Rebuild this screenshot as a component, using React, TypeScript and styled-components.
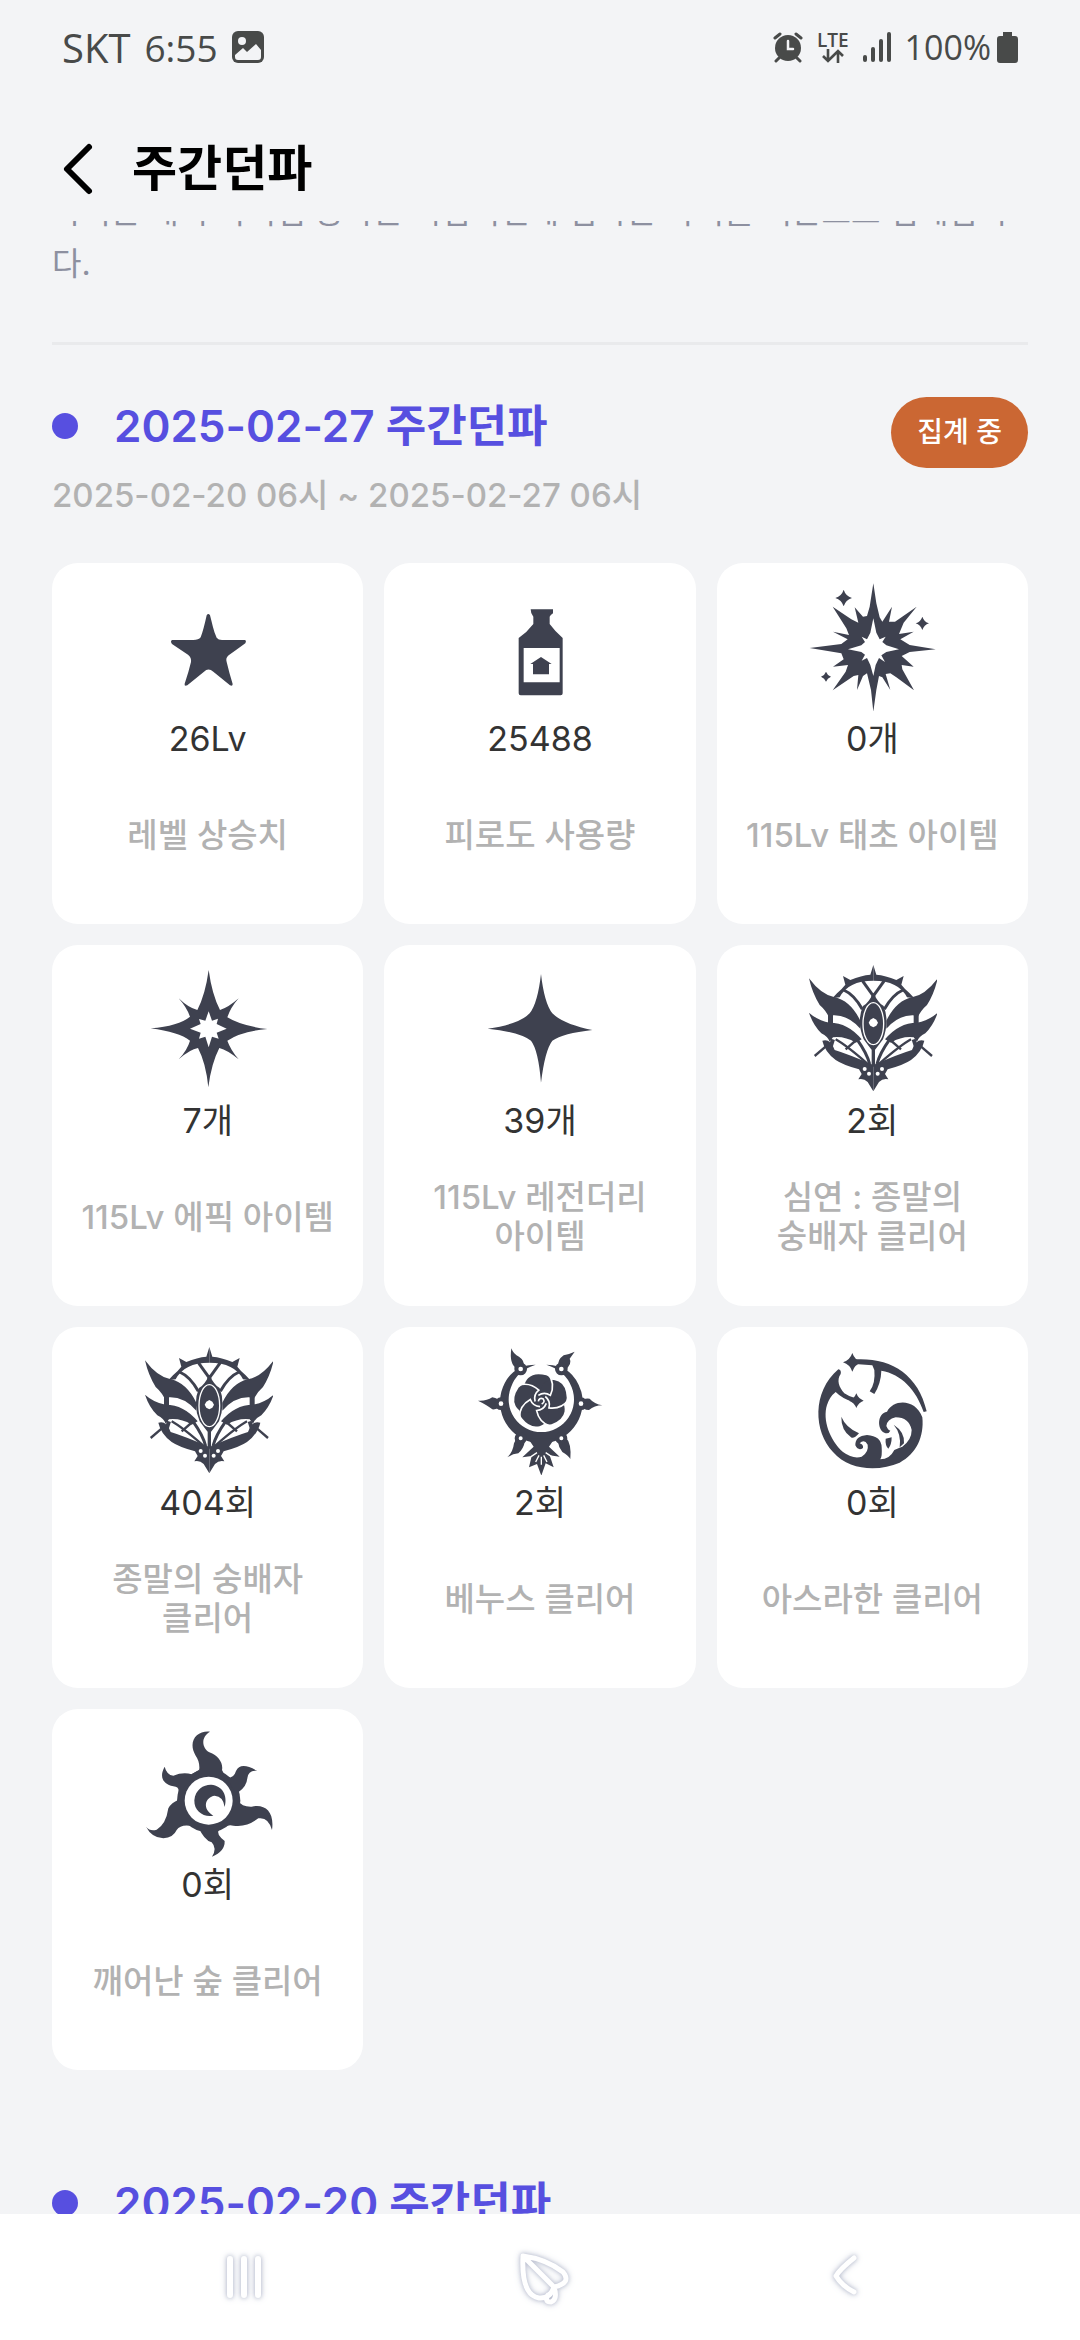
import React from "react";
import styled, { createGlobalStyle } from "styled-components";

const INK = "#3e414f";

const GlobalStyle = createGlobalStyle`
  * { box-sizing: border-box; }
  body {
    margin: 0;
    background: #f3f4f6;
    font-family: Inter, "Noto Sans CJK KR", sans-serif;
    color: #333;
  }
  h1, h2, p, dl, dd, dt { margin: 0; }
  svg { display: block; flex: none; }
`;

const Screen = styled.div`
  height: 100vh;
  display: flex;
  flex-direction: column;
  background: #f3f4f6;
`;

const StatusBar = styled.div`
  height: 94px;
  padding: 0 62px;
  display: flex;
  align-items: center;
  justify-content: space-between;
  color: #484a49;
  font-family: "Open Sans", sans-serif;
  font-size: 34px;
`;

const StatusGroup = styled.div<{ $gap: number }>`
  display: flex;
  align-items: center;
  gap: ${(p) => p.$gap}px;
`;

const Carrier = styled.span`
  font-size: 40px;
`;

const Clock = styled.span`
  font-size: 37px;
`;

const Network = styled.span`
  display: flex;
  flex-direction: column;
  align-items: center;
  font-size: 19px;
  line-height: 18px;
  font-weight: 600;
`;

const AppBar = styled.header`
  flex: none;
  height: 127px;
  padding: 22px 52px 0;
  display: flex;
  align-items: center;
  gap: 28px;
`;

const IconButton = styled.button`
  border: 0;
  padding: 0;
  background: none;
  color: #000;
`;

const PageTitle = styled.h1`
  font-size: 49px;
  line-height: 52px;
  font-weight: 700;
  color: #000;
`;

const Content = styled.main`
  flex: 1;
  min-height: 0;
  overflow: hidden;
  padding: 0 52px;
`;

const Notice = styled.p`
  margin-top: -35px;
  padding-bottom: 52px;
  border-bottom: 3px solid #e9eaec;
  color: #8d90a0;
  font-size: 32px;
  line-height: 52px;
`;

const Week = styled.section`
  padding: 52px 0;
`;

const WeekHead = styled.div`
  display: flex;
  justify-content: space-between;
  align-items: flex-start;
`;

const WeekTitle = styled.h2`
  display: flex;
  align-items: center;
  gap: 36px;
  font-size: 44px;
  line-height: 58px;
  font-weight: 600;
  color: #574fe0;

  &::before {
    content: "";
    width: 26px;
    height: 26px;
    border-radius: 50%;
    background: currentColor;
  }
`;

const Period = styled.p`
  margin-top: 15px;
  font-size: 33px;
  line-height: 50px;
  font-weight: 500;
  color: #b2b2b2;
`;

const Badge = styled.span`
  padding: 0 26px;
  border-radius: 36px;
  background: #cb6733;
  color: #fff;
  font-size: 28px;
  line-height: 71px;
  font-weight: 500;
`;

const Grid = styled.dl`
  margin-top: 43px;
  display: grid;
  grid-template-columns: repeat(3, 1fr);
  gap: 21px;
`;

const Tile = styled.div`
  padding: 18px 24px 33px;
  border-radius: 26px;
  background: #fff;
  display: flex;
  flex-direction: column;
  align-items: center;
  text-align: center;
`;

const Value = styled.dd`
  order: 1;
  font-size: 34px;
  line-height: 56px;
`;

const Label = styled.dt`
  order: 2;
  margin-top: 12px;
  min-height: 112px;
  display: flex;
  align-items: center;
  word-break: keep-all;
  color: #b2b2b2;
  font-size: 33px;
  line-height: 39px;
  font-weight: 500;
`;

const NavBar = styled.nav`
  flex: none;
  height: 126px;
  padding-left: 8px;
  background: #fff;
  display: flex;
  justify-content: center;
`;

const NavButton = styled.button`
  flex: 0 0 28%;
  border: 0;
  padding: 0;
  background: none;
  display: flex;
  align-items: center;
  justify-content: center;

  svg {
    filter: drop-shadow(0 0 2px #b4b9cb) drop-shadow(0 0 3px #dfe2ea);
  }
`;

function Glyph({ box, children }: { box: string; children: React.ReactNode }) {
  return (
    <svg width="130" height="130" viewBox={box} fill={INK} aria-hidden="true">
      {children}
    </svg>
  );
}

const sparkle = (x: number, y: number, r: number) => {
  const k = Math.round(r / 4);
  return `M${x} ${y - r}Q${x + k} ${y - k} ${x + r} ${y}Q${x + k} ${y + k} ${x} ${y + r}Q${x - k} ${y + k} ${x - r} ${y}Q${x - k} ${y - k} ${x} ${y - r}Z`;
};

const StarGlyph = () => (
  <Glyph box="39 33 390 390">
    <path d="M230 136Q235 128 240 136C246 158 250 182 260 203Q265 210 276 210H345Q350 212 346 220Q316 242 296 256Q286 264 290 276Q298 310 308 342Q308 350 300 346L250 305Q235 292 222 305L172 346Q162 350 164 341Q176 306 183 276Q185 262 174 254L126 222Q120 213 126 210H190Q206 210 212 202Q220 182 230 136Z" />
  </Glyph>
);

const PotionGlyph = () => (
  <Glyph box="1036 33 390 390">
    <path d="M1203 118h67v12q-8 5-10 10v22q16 22 39 42v166q0 6-6 6h-120q-6 0-6-6v-166q26-18 44-42v-22q-8-8-8-22z" />
    <path fill="#fff" d="M1182 234h108v103h-108z" />
    <path d="M1234 261l32 21h-8v31h-48v-31h-8z" />
  </Glyph>
);

const PrimevalGlyph = () => (
  <Glyph box="82 33 390 390">
    <path d="M281 40L290 100 300 142 308 155 337 110 328 155 346 155 411 110 372 158 358 192 402 185 362 208 390 225 468 238 390 246 366 258 402 290 366 285 368 298 403 361 350 322 332 310 318 312 332 360 308 322 298 318 290 360 281 425 274 360 262 310 250 318 232 360 236 315 222 318 159 361 198 305 205 285 160 290 192 268 185 250 90 234 185 222 204 208 160 185 208 195 200 175 159 110 215 148 236 158 225 112 250 140 262 138 270 110Z" />
    <path fill="#fff" d="M281 145L290 188 300 208 318 200 308 216 320 226 358 238 320 246 305 256 316 276 298 264 288 285 281 318 272 285 262 264 246 272 256 254 245 246 205 238 245 226 256 216 246 200 262 208 272 188Z" />
    <path d={sparkle(192, 84, 25) + sparkle(428, 160, 20) + sparkle(139, 320, 15)} />
  </Glyph>
);

const EpicGlyph = () => (
  <Glyph box="39 39 390 390">
    <path d="M236 60Q246 134 270 180Q296 172 326 145Q302 172 292 202Q334 228 412 237Q334 244 292 272Q302 300 326 328Q292 300 268 294Q244 340 235 412Q228 340 204 294Q180 298 146 328Q172 300 180 272Q146 246 62 235Q146 228 180 200Q170 172 146 145Q176 174 202 180Q226 134 236 60Z" />
    <path fill="#fff" d="M236 184L246 212 264 206 260 222 290 236 260 248 266 266 246 260 236 292 226 260 207 266 212 248 180 236 212 222 207 207 226 212Z" />
  </Glyph>
);

const LegendaryGlyph = () => (
  <Glyph box="1036 39 390 390">
    <path d="M1234 72Q1244 160 1268 190Q1300 222 1388 240Q1300 250 1268 272Q1246 300 1234 398Q1226 300 1204 272Q1170 246 1074 236Q1170 222 1200 190Q1224 160 1234 72Z" />
  </Glyph>
);

const AbyssHalf = () => (
  <>
    <path d="M88 85Q125 135 165 142Q212 152 242 212V236Q205 194 160 196L152 210Q140 182 120 165Q98 130 88 85Z" />
    <path d="M88 188Q115 212 150 218Q205 218 246 268L228 278Q195 258 160 262L150 275Q145 260 125 250Q100 225 88 188Z" />
    <path d="M145 185h15v38h-15z" />
    <path d="M128 272Q152 264 165 300Q205 312 281 345V424L264 396Q252 384 236 388L246 372L238 358Q190 345 168 330Q135 305 128 272Z" />
    <path d="M158 145L172 130Q186 118 197 104L190 78L212 90Q245 76 272 74L281 45V92Q205 92 180 142Z" />
    <g fill="none" stroke={INK} strokeWidth="7">
      <path d="M105 318L142 286" />
      <path d="M192 120Q224 134 248 178" strokeWidth="9" />
      <path d="M248 92L284 142" strokeWidth="9" />
      <path d="M168 268Q200 286 262 340" />
      <path d="M198 298L230 270" />
      <path d="M232 268Q262 310 270 342" strokeWidth="9" />
      <path d="M160 268L150 300" strokeWidth="12" />
    </g>
  </>
);

const AbyssGlyph = () => (
  <Glyph box="82 39 390 390">
    <AbyssHalf />
    <g transform="translate(562 0) scale(-1 1)">
      <AbyssHalf />
    </g>
    <path d="M281 128Q296 160 312 168Q330 215 310 268Q294 290 281 306Q268 290 252 268Q230 215 250 168Q266 160 281 128ZM276 290h10v60h-10z" />
    <ellipse cx="281" cy="221" rx="31" ry="63" fill="none" stroke="#fff" strokeWidth="4" />
    <path fill="#fff" d="M281 204l9 5 5 9-5 9-9 5-9-5-5-9 5-9z" />
    <g fill="#fff">
      <circle cx="255" cy="357" r="6" />
      <circle cx="307" cy="357" r="6" />
      <circle cx="268" cy="371" r="6" />
      <circle cx="294" cy="371" r="6" />
    </g>
  </Glyph>
);

const petals = [0, 72, 144, 216, 288];

const VenusGlyph = () => (
  <Glyph box="46 45 390 390">
    <path d="M228 104Q170 122 154 172A98 98 0 1 0 336 172Q318 122 260 104Q340 104 365 185A124 124 0 1 1 125 185Q150 104 228 104Z" />
    <path d="M155 55Q162 74 178 80Q196 92 192 110L172 116Q148 104 155 55Z" />
    <path d="M345 65Q330 72 312 76Q292 90 296 110L318 118Q338 100 330 86Z" />
    <path d="M55 212Q80 214 98 202Q116 204 130 222Q114 240 98 238Q84 226 55 212Z" />
    <path d="M428 226Q404 222 390 206Q372 202 358 222Q370 240 388 240Q404 226 428 226Z" />
    <path d="M143 382Q160 366 163 340L172 322L196 332Q192 356 176 370Q160 370 143 382Z" />
    <path d="M332 387Q326 376 308 366Q296 350 294 332L318 322Q336 340 332 387Z" />
    <path d="M205 325H285L268 350L300 380L270 376L282 412L258 400L245 437L232 402L208 412L216 378L188 382L222 350Z" />
    <g stroke="#fff" strokeWidth="4" fill="none">
      <path d="M238 376L228 396M252 376L262 396M232 368L214 380M258 368L276 380M245 380V404" />
    </g>
    <g stroke={INK} strokeWidth="12" fill="#fff">
      <circle cx="183" cy="117" r="13" />
      <circle cx="305" cy="117" r="13" />
      <circle cx="124" cy="221" r="13" />
      <circle cx="364" cy="221" r="13" />
      <circle cx="183" cy="325" r="12" />
      <circle cx="305" cy="325" r="12" />
    </g>
    {petals.map((a) => (
      <path key={a} transform={`rotate(${a} 244 212)`} d="M244 212C186 204 186 164 206 144Q224 126 260 136C290 150 294 184 268 212Z" />
    ))}
    <g fill="none" stroke="#fff" strokeWidth="5">
      {petals.map((a) => (
        <path key={a} transform={`rotate(${a} 244 212)`} d="M236 196Q254 184 272 196Q288 162 266 132" />
      ))}
      <path d="M236 214Q238 202 250 206Q258 216 246 222" />
    </g>
  </Glyph>
);

const AsrahanGlyph = () => (
  <Glyph box="52 45 390 390">
    <path d="M146 118Q156 120 153 132C140 150 148 172 164 190Q178 200 196 204L192 216Q160 208 138 186Q120 200 112 225C98 270 120 330 160 366Q190 388 216 380Q238 366 234 344Q224 326 210 340Q222 344 220 354Q206 364 197 346Q196 318 232 315Q275 318 276 352Q278 380 272 388Q300 388 314 360Q330 352 338 350Q366 330 366 300Q358 262 318 262Q292 268 290 288Q296 302 302 302Q296 314 284 308C262 298 262 250 292 245C312 206 378 206 398 262C404 320 380 372 330 398C270 424 180 424 130 366C72 306 66 186 146 118Z" />
    <path d="M196 88C300 82 385 130 411 244L402 246C380 180 335 132 275 122Q274 160 254 192L240 184Q258 160 254 120L248 106L196 102Z" />
    <path d={sparkle(188, 97, 28) + sparkle(200, 212, 22)} />
    <path d="M155 260Q168 292 208 310Q192 328 184 322Q154 300 155 260Z" />
    <path d="M312 284Q346 306 343 340L330 352Q336 312 312 284Z" />
    <path d="M288 326L306 322Q306 344 296 356Q286 346 288 326Z" />
  </Glyph>
);

const ForestGlyph = () => (
  <Glyph box="39 36 390 390">
    <circle cx="236" cy="257" r="95" />
    <path d="M205 180Q214 145 197 122C172 80 200 46 240 50C212 66 215 98 238 112C266 122 280 145 276 165Q284 186 305 190L290 220Z" />
    <path d="M145 235Q150 215 130 214C92 205 90 180 104 155Q110 180 130 182Q160 170 185 178L215 160Z" />
    <path d="M290 190Q312 190 318 168Q332 138 382 168Q355 164 352 190Q350 215 325 232L320 240Z" />
    <path d="M325 258Q335 276 365 275C405 266 434 290 426 345Q415 305 385 310Q350 338 310 332Q290 325 262 350Z" />
    <path d="M205 335Q222 375 245 382Q262 400 246 425Q285 410 284 378Q258 358 266 345L280 335Z" />
    <path d="M145 255Q125 262 115 280Q108 328 80 344Q60 350 48 335Q65 368 100 370Q130 368 140 345Q155 322 205 338Z" />
    <circle cx="236" cy="257" r="72" fill="#fff" />
    <path d="M250 302C222 308 192 290 193 256C196 222 222 208 244 209C276 212 294 240 284 276Q280 244 254 242C226 246 214 280 250 302Z" />
  </Glyph>
);

const stats: { value: string; label: string; icon: () => React.ReactElement }[] = [
  { value: "26Lv", label: "레벨 상승치", icon: StarGlyph },
  { value: "25488", label: "피로도 사용량", icon: PotionGlyph },
  { value: "0개", label: "115Lv 태초 아이템", icon: PrimevalGlyph },
  { value: "7개", label: "115Lv 에픽 아이템", icon: EpicGlyph },
  { value: "39개", label: "115Lv 레전더리 아이템", icon: LegendaryGlyph },
  { value: "2회", label: "심연 : 종말의 숭배자 클리어", icon: AbyssGlyph },
  { value: "404회", label: "종말의 숭배자 클리어", icon: AbyssGlyph },
  { value: "2회", label: "베누스 클리어", icon: VenusGlyph },
  { value: "0회", label: "아스라한 클리어", icon: AsrahanGlyph },
  { value: "0회", label: "깨어난 숲 클리어", icon: ForestGlyph },
];

export default function App() {
  return (
    <Screen>
      <GlobalStyle />
      <StatusBar>
        <StatusGroup $gap={14}>
          <Carrier>SKT</Carrier>
          <Clock>6:55</Clock>
          <svg width="32" height="32" viewBox="0 0 32 32" aria-hidden="true">
            <rect width="32" height="32" rx="6" fill="#484a49" />
            <circle cx="10" cy="10" r="4" fill="#f3f4f6" />
            <path d="M3 24l8-7 4 4 9-8 5 6v7q0 3-3 3H6q-3 0-3-3z" fill="#f3f4f6" />
          </svg>
        </StatusGroup>
        <StatusGroup $gap={14}>
          <svg width="30" height="31" viewBox="0 0 30 31" fill="none" stroke="#484a49" strokeLinecap="round" aria-hidden="true">
            <circle cx="15" cy="16" r="13" fill="#484a49" stroke="none" />
            <path d="M2 6l5-4M28 6l-5-4M6 26l-3 3M24 26l3 3" strokeWidth="3" />
            <path d="M15 9v8h5" stroke="#f3f4f6" strokeWidth="2.5" />
          </svg>
          <Network>
            LTE
            <svg width="24" height="14" viewBox="0 0 24 14" fill="none" stroke="#484a49" strokeWidth="2.6" aria-hidden="true">
              <path d="M7 0v12M2 7l5 5 5-5M17 14V2M12 7l5-5 5 5" />
            </svg>
          </Network>
          <svg width="28" height="30" viewBox="0 0 28 30" fill="#484a49" aria-hidden="true">
            <rect y="23" width="4" height="7" rx="2" />
            <rect x="8" y="15" width="4" height="15" rx="2" />
            <rect x="16" y="7" width="4" height="23" rx="2" />
            <rect x="24" width="4" height="30" rx="2" />
          </svg>
          <StatusGroup $gap={6}>
            <span>100%</span>
            <svg width="21" height="31" viewBox="0 0 21 31" fill="#484a49" aria-hidden="true">
              <path d="M6 0h9v4h3q3 0 3 3v21q0 3-3 3H3q-3 0-3-3V7q0-3 3-3h3z" />
            </svg>
          </StatusGroup>
        </StatusGroup>
      </StatusBar>

      <AppBar>
        <IconButton aria-label="뒤로">
          <svg width="52" height="54" viewBox="0 0 52 54" fill="none" stroke="#000" strokeWidth="6" strokeLinecap="round" strokeLinejoin="round" aria-hidden="true">
            <path d="M37 5L15 27l22 22" />
          </svg>
        </IconButton>
        <PageTitle>주간던파</PageTitle>
      </AppBar>

      <Content>
        <Notice>가치는 매시 아이템 증가는 시점이전에 접사는 차이를 기준으로 집계됩니다.</Notice>
        <Week>
          <WeekHead>
            <div>
              <WeekTitle>2025-02-27 주간던파</WeekTitle>
              <Period>2025-02-20 06시 ~ 2025-02-27 06시</Period>
            </div>
            <Badge>집계 중</Badge>
          </WeekHead>
          <Grid>
            {stats.map(({ value, label, icon: Icon }) => (
              <Tile key={label}>
                <Icon />
                <Label>{label}</Label>
                <Value>{value}</Value>
              </Tile>
            ))}
          </Grid>
        </Week>
        <Week>
          <WeekTitle>2025-02-20 주간던파</WeekTitle>
        </Week>
      </Content>

      <NavBar>
        <NavButton aria-label="최근 앱">
          <svg width="56" height="56" viewBox="0 0 56 56" fill="none" stroke="#fff" strokeWidth="6" strokeLinecap="round" aria-hidden="true">
            <path d="M14 10v36M28 10v36M42 10v36" />
          </svg>
        </NavButton>
        <NavButton aria-label="홈">
          <svg width="64" height="64" viewBox="0 0 64 64" fill="none" stroke="#fff" strokeWidth="5" strokeLinecap="round" strokeLinejoin="round" aria-hidden="true">
            <path d="M11 11Q34 14 51 27Q60 38 42 42Q38 54 27 53Q9 50 11 11L42 42Q46 54 39 57Q32 57 36 50" />
          </svg>
        </NavButton>
        <NavButton aria-label="뒤로 가기">
          <svg width="56" height="56" viewBox="0 0 56 56" fill="none" stroke="#fff" strokeWidth="5" strokeLinecap="round" strokeLinejoin="round" aria-hidden="true">
            <path d="M38 9Q24 20 20 27Q26 37 38 43" />
          </svg>
        </NavButton>
      </NavBar>
    </Screen>
  );
}
